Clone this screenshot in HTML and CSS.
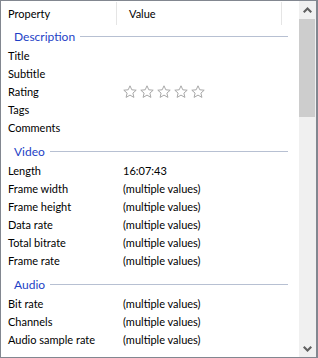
FILE: index.html
```html
<!DOCTYPE html>
<html lang="en">
<head>
    <meta charset="UTF-8">
    <title>Properties</title>
    <link rel="stylesheet" href="styles.css">
</head>
<body>
    <div class="frame">
        <div class="list">
            <div class="head">
                <div class="head-cell first">Property</div>
                <div class="head-cell">Value</div>
            </div>

            <div class="group top">Description</div>
            <div class="row"><span>Title</span><span></span></div>
            <div class="row"><span>Subtitle</span><span></span></div>
            <div class="row">
                <span>Rating</span>
                <span class="stars">
                    <svg viewBox="0 0 14 14"><path d="M7 .8l1.8 4 4.4.4-3.3 2.9 1 4.3L7 10.1l-3.9 2.3 1-4.3L.8 5.2l4.4-.4z"/></svg>
                    <svg viewBox="0 0 14 14"><path d="M7 .8l1.8 4 4.4.4-3.3 2.9 1 4.3L7 10.1l-3.9 2.3 1-4.3L.8 5.2l4.4-.4z"/></svg>
                    <svg viewBox="0 0 14 14"><path d="M7 .8l1.8 4 4.4.4-3.3 2.9 1 4.3L7 10.1l-3.9 2.3 1-4.3L.8 5.2l4.4-.4z"/></svg>
                    <svg viewBox="0 0 14 14"><path d="M7 .8l1.8 4 4.4.4-3.3 2.9 1 4.3L7 10.1l-3.9 2.3 1-4.3L.8 5.2l4.4-.4z"/></svg>
                    <svg viewBox="0 0 14 14"><path d="M7 .8l1.8 4 4.4.4-3.3 2.9 1 4.3L7 10.1l-3.9 2.3 1-4.3L.8 5.2l4.4-.4z"/></svg>
                </span>
            </div>
            <div class="row"><span>Tags</span><span></span></div>
            <div class="row"><span>Comments</span><span></span></div>

            <div class="group">Video</div>
            <div class="row"><span>Length</span><span>16:07:43</span></div>
            <div class="row"><span>Frame width</span><span>(multiple values)</span></div>
            <div class="row"><span>Frame height</span><span>(multiple values)</span></div>
            <div class="row"><span>Data rate</span><span>(multiple values)</span></div>
            <div class="row"><span>Total bitrate</span><span>(multiple values)</span></div>
            <div class="row"><span>Frame rate</span><span>(multiple values)</span></div>

            <div class="group">Audio</div>
            <div class="row"><span>Bit rate</span><span>(multiple values)</span></div>
            <div class="row"><span>Channels</span><span>(multiple values)</span></div>
            <div class="row"><span>Audio sample rate</span><span>(multiple values)</span></div>

            <div class="group">Media</div>
        </div>

        <div class="scrollbar">
            <div class="arrow">
                <svg viewBox="0 0 9 6"><path d="M0 4.5L4.5 0 9 4.5 7.5 6 4.5 3 1.5 6z"/></svg>
            </div>
            <div class="track">
                <div class="thumb"></div>
            </div>
            <div class="arrow">
                <svg viewBox="0 0 9 6"><path d="M0 1.5L1.5 0 4.5 3 7.5 0 9 1.5 4.5 6z"/></svg>
            </div>
        </div>
    </div>
</body>
</html>
```

FILE: styles.css
```css
body {
    margin: 0;
    font-family: 'Lato', sans-serif;
    font-size: 11px;
    color: #000;
    background-color: white;
}

.frame {
    width: 318px;
    height: 358px;
    box-sizing: border-box;
    border: 1px solid #828790;
    border-right-width: 2px;
    display: flex;
    overflow: hidden;
}

.list {
    flex: 1;
    overflow: hidden;
}

.head {
    display: grid;
    grid-template-columns: 122px 159px;
    height: 24px;
    align-items: center;
}

.head-cell {
    height: 23px;
    line-height: 23px;
    border-right: 1px solid #e5e5e5;
    padding-left: 6px;
}

.head-cell.first {
    padding-left: 7px;
    box-sizing: border-box;
    width: 116px;
    margin-right: 6px;
}

.group {
    display: flex;
    align-items: center;
    height: 21px;
    margin-top: 4px;
    padding-left: 13px;
    padding-right: 11px;
    color: #1e3fc6;
    font-size: 12px;
}

.group.top {
    margin-top: 1px;
}

.group::after {
    content: "";
    flex: 1;
    height: 1px;
    margin-left: 5px;
    background-color: #b7c0d2;
}

.row {
    display: grid;
    grid-template-columns: 115px 1fr;
    height: 18px;
    line-height: 18px;
    padding-left: 7px;
}

.stars {
    display: flex;
    gap: 3px;
    align-items: center;
}

.stars svg {
    width: 14px;
    height: 14px;
    fill: #fff;
    stroke: #a8a8a8;
    stroke-width: 1;
}

.scrollbar {
    width: 17px;
    background-color: #f0f0f0;
    display: flex;
    flex-direction: column;
}

.arrow {
    height: 17px;
    display: flex;
    align-items: center;
    justify-content: center;
}

.arrow svg {
    width: 9px;
    height: 6px;
    fill: #606060;
}

.track {
    flex: 1;
    padding: 1px 1px 0 0;
}

.thumb {
    height: 98px;
    background-color: #cdcdcd;
}
```
